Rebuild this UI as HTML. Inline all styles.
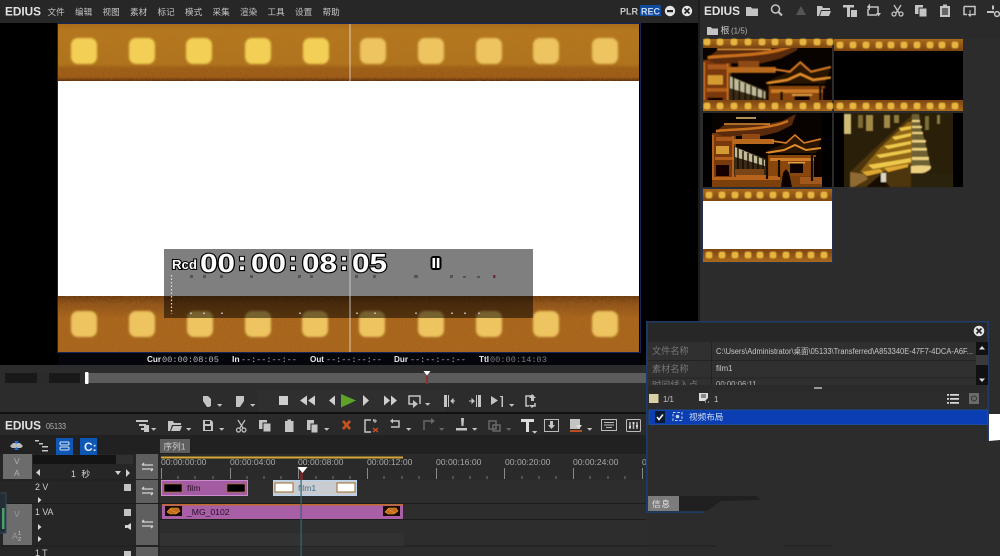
<!DOCTYPE html>
<html lang="zh"><head><meta charset="utf-8"><title>EDIUS</title>
<style>
html,body{margin:0;padding:0;background:#2c2c2c;width:1000px;height:556px;overflow:hidden}
svg{display:block}
text{font-family:"Liberation Sans","Noto Sans CJK SC",sans-serif}
.m{font-size:8.6px;fill:#c4c4c4}
.ed{font-weight:bold;font-size:12.2px;fill:#e2e2e2}
.ic{fill:#c4c4c4}
.st{fill:none;stroke:#c4c4c4;stroke-width:1.5}
.tc{font-family:"Liberation Mono",monospace;font-size:8.6px;fill:#b9b9b9;letter-spacing:.1px}
.tl{font-weight:bold;font-size:8.6px;fill:#e8e8e8}
.big{font-weight:bold;font-size:26px;fill:#fff;stroke:#000;stroke-width:2.2px;paint-order:stroke fill}
.rl{font-size:8.6px;fill:#a8a8a8}
.w{font-size:8.8px;fill:#c9c9c9}
.lab{font-size:8.8px;fill:#777}
</style></head><body>
<svg width="1000" height="556" viewBox="0 0 1000 556" xmlns="http://www.w3.org/2000/svg">
<defs>
<linearGradient id="tp" x1="0" y1="0" x2="0" y2="1"><stop offset="0" stop-color="#a96a1a"/><stop offset=".12" stop-color="#b4761e"/><stop offset=".7" stop-color="#b0721d"/><stop offset=".78" stop-color="#9d5d17"/><stop offset=".93" stop-color="#9c5a17"/><stop offset="1" stop-color="#5e2c0c"/></linearGradient>
<linearGradient id="bt" x1="0" y1="0" x2="0" y2="1"><stop offset="0" stop-color="#6d3a10"/><stop offset=".14" stop-color="#8f5219"/><stop offset=".4" stop-color="#a8641c"/><stop offset="1" stop-color="#a8641c"/></linearGradient>
<linearGradient id="ts" x1="0" y1="0" x2="0" y2="1"><stop offset="0" stop-color="#a9691c"/><stop offset="1" stop-color="#7c4512"/></linearGradient>
<linearGradient id="ts2" x1="0" y1="0" x2="0" y2="1"><stop offset="0" stop-color="#7c4512"/><stop offset="1" stop-color="#a9691c"/></linearGradient>
<filter id="b1" x="-20%" y="-20%" width="140%" height="140%"><feGaussianBlur stdDeviation="1"/></filter>
<filter id="b05" x="-20%" y="-20%" width="140%" height="140%"><feGaussianBlur stdDeviation=".45"/></filter>
<filter id="b03" x="-5%" y="-5%" width="110%" height="110%"><feGaussianBlur stdDeviation=".35"/></filter>
<filter id="grain" x="0" y="0" width="100%" height="100%"><feTurbulence type="fractalNoise" baseFrequency=".55" numOctaves="2" seed="4"/><feColorMatrix values="0 0 0 0 .42  0 0 0 0 .22  0 0 0 0 .02  0 0 0 .7 -.3"/></filter>
<rect id="h" width="26" height="26" rx="7" fill="#f3d055" filter="url(#b1)"/>
<rect id="h2" width="26" height="26" rx="7" fill="#edc45f" filter="url(#b1)"/>
<rect id="th" x="-3.4" y="-3.4" width="6.800" height="6.800" rx="2.200" fill="#e6b640" filter="url(#b05)"/>
<path id="dn" d="M0 0h5.4l-2.7 2.8z" fill="#c4c4c4"/>
<g id="temple">
<rect width="110" height="74" fill="#080300"/>
<g filter="url(#b03)">
<rect y="62" width="110" height="12" fill="#7b3f10"/>
<rect x="0" y="62" width="68" height="5" fill="#b7641c"/><rect x="88" y="64" width="22" height="7" fill="#a2591a"/>
<path d="M0 20H24V64H0z" fill="#7a390c"/>
<path d="M4 33H17V41H4z" fill="#d69a30"/><path d="M4 24H20V28H4z" fill="#a9561a"/>
<path d="M3 44H22V47H3z" fill="#b2601c"/><path d="M4 52H17V63H4z" fill="#120600"/>
<path d="M1 22V64M21 22V64" stroke="#c56e20" stroke-width="1.500"/>
<path d="M3 19 12 12H50L70 8 84 1 80 12 66 19 50 23H10z" fill="#5a290a"/>
<path d="M4 18C20 16 56 17 76 8" stroke="#c8701f" stroke-width="2.500" fill="none"/>
<path d="M12 11H58" stroke="#e09036" stroke-width="1.600"/><path d="M24 5H44" stroke="#e6c070" stroke-width="1.500"/>
<path d="M21 26H62V31H21z" fill="#b8691f"/><path d="M30 21H48V26H30z" fill="#8e4a14"/>
<path d="M22 33 54 46V62H22z" fill="#3a2c12"/>
<path d="M23 34 53 47V53L23 44z" fill="#c1bb98"/>
<path d="M26 35V62M31 38V62M36 40V62M41 42V62M46 44V62M51 46V62" stroke="#160d03" stroke-width="1.400"/>
<path d="M23 56H52V62H23z" fill="#7a4414"/>
<path d="M55 38 74 30 83 22 91 31 109 27 104 40H58z" fill="#2a1204"/>
<path d="M60 28 74 30 83 22 92 30 109 26" stroke="#d27824" stroke-width="1.700" fill="none"/>
<path d="M54 40 72 37 83 32 94 37 109 35" stroke="#e08c2c" stroke-width="2" fill="none"/>
<path d="M56 42H104V63H56z" fill="#8a4610"/>
<path d="M58 45H102V48H58z" fill="#cf7c26"/>
<path d="M78 49h13v11H78z" fill="#0f0500"/><path d="M76 49h17v1.500H76z" fill="#e8a040"/>
<path d="M55 40V66M100 40V68M67 47V64" stroke="#180a02" stroke-width="2.200"/>
<path d="M69 74 71 60 74 56 77 60 80 74z" fill="#080300"/>
<path d="M102 44h8v20h-8z" fill="#0c0501"/>
</g>
</g>
</defs>

<!-- base -->
<rect width="1000" height="556" fill="#2c2c2c"/>
<rect width="698" height="23" fill="#272727"/>
<rect y="23" width="698" height="342" fill="#000"/>

<!-- film frame -->
<rect x="57.500" y="23.500" width="583" height="329" fill="none" stroke="#16265c" stroke-width="1"/>
<rect x="58" y="24" width="581" height="57" fill="url(#tp)"/>
<rect x="58" y="81" width="581" height="215" fill="#fff"/>
<rect x="58" y="296" width="581" height="56" fill="url(#bt)"/>
<rect x="58" y="24" width="581" height="57" filter="url(#grain)"/>
<rect x="58" y="296" width="581" height="56" filter="url(#grain)"/>
<g>
<use href="#h" x="71" y="38"/><use href="#h" x="129" y="38"/><use href="#h" x="186" y="38"/><use href="#h" x="245" y="38"/><use href="#h" x="303" y="38"/><use href="#h2" x="360" y="38"/><use href="#h2" x="418" y="38"/><use href="#h2" x="476" y="38"/><use href="#h2" x="533" y="38"/><use href="#h2" x="592" y="38"/>
<use href="#h2" x="71" y="311"/><use href="#h2" x="129" y="311"/><use href="#h2" x="187" y="311"/><use href="#h2" x="245" y="311"/><use href="#h2" x="302" y="311"/><use href="#h2" x="359" y="311"/><use href="#h2" x="418" y="311"/><use href="#h2" x="476" y="311"/><use href="#h2" x="533" y="311"/><use href="#h2" x="592" y="311"/>
</g>
<rect x="349.500" y="24" width="1" height="328" fill="#fff" fill-opacity=".65"/>

<!-- OSD -->
<rect x="164" y="249" width="369" height="69" fill="#000" fill-opacity=".5"/>
<rect x="349.500" y="249" width="1" height="69" fill="#e0e0e0" fill-opacity=".75"/>
<text x="172" y="269" font-size="12.500" font-weight="bold" fill="#fff" stroke="#000" stroke-width="2" paint-order="stroke fill" textLength="25" lengthAdjust="spacingAndGlyphs">Rcd</text>
<text class="big" x="200" y="272" textLength="35" lengthAdjust="spacingAndGlyphs">00</text>
<text class="big" x="237.500" y="270" textLength="9" lengthAdjust="spacingAndGlyphs">:</text>
<text class="big" x="251" y="272" textLength="35" lengthAdjust="spacingAndGlyphs">00</text>
<text class="big" x="288.500" y="270" textLength="9" lengthAdjust="spacingAndGlyphs">:</text>
<text class="big" x="302" y="272" textLength="35" lengthAdjust="spacingAndGlyphs">08</text>
<text class="big" x="339.500" y="270" textLength="9" lengthAdjust="spacingAndGlyphs">:</text>
<text class="big" x="352" y="272" textLength="35" lengthAdjust="spacingAndGlyphs">05</text>
<rect x="430.500" y="256" width="11" height="14" rx="3" fill="#000"/>
<rect x="432.500" y="258" width="2.600" height="10" fill="#fff"/><rect x="436.800" y="258" width="2.600" height="10" fill="#fff"/>
<path d="M171.500 275V314" stroke="#ddd" stroke-width="1.200" stroke-dasharray="1.500 2"/>
<g fill="#555"><rect x="190" y="275" width="3" height="3"/><rect x="203" y="275" width="3" height="3"/><rect x="220" y="275" width="3" height="3"/><rect x="250" y="275" width="3" height="3"/><rect x="298" y="275" width="3" height="3"/><rect x="310" y="275" width="3" height="3"/><rect x="355" y="275" width="3" height="3"/><rect x="373" y="275" width="3" height="3"/><rect x="414" y="275" width="4" height="3"/><rect x="450" y="275" width="3" height="3"/><rect x="463" y="276" width="3" height="2"/><rect x="477" y="276" width="3" height="2"/></g>
<rect x="493" y="275" width="2.500" height="3" fill="#743038"/>
<g fill="#ccc" fill-opacity=".8"><rect x="190" y="312.500" width="2" height="1.500"/><rect x="203" y="312.500" width="2" height="1.500"/><rect x="221" y="312.500" width="2" height="1.500"/><rect x="299" y="312.500" width="2" height="1.500"/><rect x="356" y="312.500" width="2" height="1.500"/><rect x="374" y="312.500" width="2" height="1.500"/><rect x="415" y="312.500" width="2" height="1.500"/><rect x="451" y="312.500" width="2" height="1.500"/><rect x="464" y="312.500" width="2" height="1.500"/><rect x="478" y="312.500" width="2" height="1.500"/></g>

<!-- status line -->
<rect x="58" y="353" width="582" height="12" fill="#05060c"/>
<text class="tl" x="147" y="362" textLength="14" lengthAdjust="spacingAndGlyphs">Cur</text><text class="tc" x="162" y="362" textLength="57">00:00:08:05</text>
<text class="tl" x="232" y="362">In</text><text class="tc" x="241" y="362" textLength="56">--:--:--:--</text>
<text class="tl" x="310" y="362" textLength="14" lengthAdjust="spacingAndGlyphs">Out</text><text class="tc" x="326" y="362" textLength="56">--:--:--:--</text>
<text class="tl" x="394" y="362" textLength="14" lengthAdjust="spacingAndGlyphs">Dur</text><text class="tc" x="410" y="362" textLength="56">--:--:--:--</text>
<text class="tl" x="479" y="362" textLength="10" lengthAdjust="spacingAndGlyphs">Ttl</text><text class="tc" x="490" y="362" textLength="57" style="fill:#7b7b7b">00:00:14:03</text>

<!-- top bar -->
<text class="ed" x="5" y="15.500" textLength="36" lengthAdjust="spacingAndGlyphs">EDIUS</text>
<text class="m" x="47.500" y="15">文件</text><text class="m" x="75" y="15">编辑</text><text class="m" x="102.500" y="15">视图</text><text class="m" x="130" y="15">素材</text><text class="m" x="157.500" y="15">标记</text><text class="m" x="185" y="15">模式</text><text class="m" x="212.500" y="15">采集</text><text class="m" x="240" y="15">渲染</text><text class="m" x="267.500" y="15">工具</text><text class="m" x="295" y="15">设置</text><text class="m" x="322.500" y="15">帮助</text>
<text x="620" y="14.500" font-size="9.600" font-weight="bold" fill="#c8c8c8" textLength="18" lengthAdjust="spacingAndGlyphs">PLR</text>
<rect x="640" y="5" width="21" height="11" fill="#0f4a9e"/>
<text x="641" y="14.500" font-size="9.600" font-weight="bold" fill="#c8d8ee" textLength="19" lengthAdjust="spacingAndGlyphs">REC</text>
<circle cx="670" cy="11" r="5.200" fill="#e6e6e6"/><rect x="667" y="10" width="6" height="2.200" fill="#222"/>
<circle cx="687" cy="11" r="5.200" fill="#e6e6e6"/><path d="M684.500 8.500l5 5M689.500 8.500l-5 5" stroke="#222" stroke-width="1.700"/>

<!-- bin panel -->
<rect x="698" y="0" width="2" height="322" fill="#1c1c1c"/>
<rect x="700" y="0" width="300" height="38" fill="#2a2a2a"/>
<text class="ed" x="704" y="15" textLength="36" lengthAdjust="spacingAndGlyphs">EDIUS</text>
<path class="ic" d="M746 7h5l1 1.500h6v7.500h-12z"/>
<circle class="st" cx="775.500" cy="9" r="4"/><path class="st" d="M778.500 12l3.500 3.500" style="stroke-width:2"/>
<path d="M796 15l5-9 5 9z" fill="#555"/>
<path class="ic" d="M817 6h5l1 2h7v2h-9l-2 6h-2zM821.500 11h9.500l-2 5h-9z"/>
<path class="ic" d="M843 5h11v2.500h-4V17h-3V7.500h-4z"/><rect x="851" y="10" width="6" height="7" class="ic"/>
<path class="st" d="M870 7h8v8M877 15h-9V9" /><path class="ic" d="M870 3.500v7l-3-3.500zM876 13h5l-2.500 3.500z"/>
<path class="st" d="M894 5l5 8M901 5l-5 8" style="stroke-width:1.300"/><circle class="st" cx="894" cy="14" r="2" style="stroke-width:1.300"/><circle class="st" cx="901" cy="14" r="2" style="stroke-width:1.300"/>
<rect class="ic" x="915" y="5" width="8" height="9"/><rect x="919" y="8" width="8" height="9" class="ic" stroke="#2a2a2a"/>
<path class="ic" d="M940 6h3V4.500h4V6h3v11h-10z"/><rect x="942" y="8" width="6" height="7" fill="#666"/>
<path class="st" d="M964 6.500h11v8h-3M967 14.500h-3v-8"/><path class="ic" d="M969.500 10v4h-2l2.500 3 2.500-3h-2v-4z"/>
<path class="ic" d="M987 11h7v2h-7z"/><path class="ic" d="M992 5.500h2v4h-2z"/><circle class="st" cx="997" cy="14" r="2.400"/>
<path class="ic" d="M707 27h4l1 1.500h6v6.500h-11z"/>
<text class="w" x="720.500" y="33.500" style="font-size:9px">根</text><text x="731" y="33.500" font-size="8" fill="#b2b2b2">(1/5)</text>

<!-- thumb 1 -->
<rect x="703" y="39" width="129" height="72" fill="#000"/>
<svg x="703" y="48" width="129" height="52" viewBox="0 10 110 44" preserveAspectRatio="none"><use href="#temple"/></svg>
<rect x="703" y="39" width="129" height="9" fill="url(#ts)"/><rect x="703" y="100" width="129" height="11" fill="url(#ts2)"/>
<g><use href="#th" x="707" y="42"/><use href="#th" x="720" y="42"/><use href="#th" x="734" y="42"/><use href="#th" x="748" y="42"/><use href="#th" x="762" y="42"/><use href="#th" x="775" y="42"/><use href="#th" x="789" y="42"/><use href="#th" x="803" y="42"/><use href="#th" x="817" y="42"/><use href="#th" x="830" y="42"/>
<use href="#th" x="707" y="106"/><use href="#th" x="720" y="106"/><use href="#th" x="734" y="106"/><use href="#th" x="748" y="106"/><use href="#th" x="762" y="106"/><use href="#th" x="775" y="106"/><use href="#th" x="789" y="106"/><use href="#th" x="803" y="106"/><use href="#th" x="817" y="106"/><use href="#th" x="830" y="106"/></g>
<!-- thumb 2 -->
<rect x="834" y="39" width="129" height="72" fill="#000"/>
<rect x="834" y="39" width="129" height="12" fill="url(#ts)"/><rect x="834" y="100" width="129" height="11" fill="url(#ts2)"/>
<g><use href="#th" x="840" y="45"/><use href="#th" x="853" y="45"/><use href="#th" x="866" y="45"/><use href="#th" x="879" y="45"/><use href="#th" x="891" y="45"/><use href="#th" x="904" y="45"/><use href="#th" x="917" y="45"/><use href="#th" x="930" y="45"/><use href="#th" x="942" y="45"/><use href="#th" x="955" y="45"/>
<use href="#th" x="840" y="106"/><use href="#th" x="853" y="106"/><use href="#th" x="866" y="106"/><use href="#th" x="879" y="106"/><use href="#th" x="891" y="106"/><use href="#th" x="904" y="106"/><use href="#th" x="917" y="106"/><use href="#th" x="930" y="106"/><use href="#th" x="942" y="106"/><use href="#th" x="955" y="106"/></g>
<!-- thumb 3 -->
<rect x="703" y="113" width="129" height="74" fill="#000"/>
<svg x="712" y="113" width="110" height="74" viewBox="0 0 110 74"><use href="#temple"/></svg>
<!-- thumb 4 -->
<rect x="834" y="113" width="129" height="74" fill="#000"/>
<g>
<rect x="844" y="113" width="109" height="74" fill="#2a2009"/>
<g filter="url(#b05)">
<rect x="844" y="114" width="7" height="20" fill="#cdbb76"/><rect x="858" y="115" width="5" height="13" fill="#7e6a30"/><rect x="866" y="115" width="7" height="16" fill="#a08a48"/><rect x="884" y="115" width="6" height="13" fill="#a08a48"/><rect x="894" y="115" width="5" height="8" fill="#8e7a3e"/><rect x="925" y="116" width="4" height="14" fill="#7e6d34"/><rect x="937" y="115" width="3" height="9" fill="#8a7a44"/>
<path d="M912 115 873 150 850 172V187H912z" fill="#4d3509"/>
<path d="M908 122 880 148 868 162 860 172 880 172 912 164V122z" fill="#8f6512"/>
<path d="M868 165l43-7v4l-38 7zM876 155l35-6v3l-31 6zM884 146l27-5v3l-23 5zM892 137l19-4v3l-16 4zM899 128l12-2v3l-10 2z" fill="#eec84c"/>
<path d="M862 172l18-3 3 3-16 4zM884 168l24-4v3l-20 5z" fill="#e0a830"/>
<path d="M850 172l14 2 4 5-14 8h-4z" fill="#8f6a32"/>
<path d="M912 114h7l2 14 4 13 3 14 3 13-6 5-13-2z" fill="#6e6236"/>
<path d="M912 120h8v2h-8zM912 126h10v2h-10zM912 132h11v2h-11zM912 140h14v2.500h-14zM912 148h15v2.500h-15zM912 157h17v3h-17zM911 166q10-1 20 0 1 5-9 7h-11z" fill="#ecd080"/>
<path d="M866 187l14-12 10 12zM878 181h8v6h-8z" fill="#171003"/>
<path d="M881 173h5v9h-5z" fill="#dcd6be"/>
<path d="M911 173h42v14h-42z" fill="#2a2009"/>
</g>
</g>
<!-- thumb 5 -->
<rect x="702.500" y="188.500" width="130" height="74" fill="#1d3a68"/>
<rect x="703" y="189" width="129" height="12" fill="url(#ts)"/><rect x="703" y="201" width="129" height="48" fill="#fff"/><rect x="703" y="249" width="129" height="13" fill="url(#ts2)"/>
<g><use href="#th" x="709" y="195"/><use href="#th" x="722" y="195"/><use href="#th" x="735" y="195"/><use href="#th" x="748" y="195"/><use href="#th" x="760" y="195"/><use href="#th" x="773" y="195"/><use href="#th" x="786" y="195"/><use href="#th" x="799" y="195"/><use href="#th" x="811" y="195"/><use href="#th" x="824" y="195"/>
<use href="#th" x="709" y="255"/><use href="#th" x="722" y="255"/><use href="#th" x="735" y="255"/><use href="#th" x="748" y="255"/><use href="#th" x="760" y="255"/><use href="#th" x="773" y="255"/><use href="#th" x="786" y="255"/><use href="#th" x="799" y="255"/><use href="#th" x="811" y="255"/><use href="#th" x="824" y="255"/></g>

<!-- scrub -->
<rect x="0" y="365" width="646" height="48" fill="#2c2c2c"/>
<rect x="5" y="373" width="75" height="10" fill="#191919"/><rect x="37" y="373" width="12" height="10" fill="#2b2b2b"/>
<rect x="88" y="373" width="558" height="10" fill="#5c5c5c"/>
<rect x="85" y="372" width="3.500" height="12" rx="1" fill="#fff"/>
<rect x="426" y="375" width="2" height="9" fill="#8a3030"/><path d="M423.500 371h7l-3.500 4.500z" fill="#fff"/>

<!-- transport -->
<rect x="258" y="390" width="188" height="22" fill="#2f2f2f"/>
<path d="M203 396h5l3 3v7l-2 1h-2l-4-6z" fill="#c4c4c4"/><use href="#dn" x="217" y="404"/>
<path d="M236 396h8v5l-4 6h-4z" fill="#c4c4c4"/><use href="#dn" x="250" y="404"/>
<rect x="279" y="396" width="9" height="9" fill="#cfcfcf"/>
<path d="M300 400.500l7-5v10zM308 400.500l7-5v10z" fill="#cfcfcf"/>
<path d="M335 395.500v10l-6-5z" fill="#cfcfcf"/>
<path d="M341 394l15 6.500-15 7z" fill="#5da32a"/>
<path d="M363 395v11l6-5.500z" fill="#cfcfcf"/>
<path d="M384 395.500l6 5-6 5zM391 395.500l6 5-6 5z" fill="#cfcfcf"/>
<path class="st" d="M416 404h-7v-8h11v8"/><path d="M413 400v8l5-4z" fill="#c4c4c4"/><use href="#dn" x="425" y="403"/>
<path d="M444 395h3v12h-3zM448 395h1v12h-1z" fill="#c4c4c4"/><path d="M451 401h4M451 401l2-2v4z" stroke="#c4c4c4" fill="#c4c4c4"/>
<path d="M478 395h3v12h-3zM476 395h1v12h-1z" fill="#c4c4c4"/><path d="M469 401h5l-2-2v4l2-2" stroke="#c4c4c4" fill="#c4c4c4"/>
<path d="M491 396l7 4.500-7 4.500z" fill="#c4c4c4"/><path d="M500 396h3v11h-1.500V397H500z" fill="#c4c4c4"/><use href="#dn" x="509" y="404"/>
<path class="st" d="M534 396h-8v10h3M533 406h2v-3"/><path d="M532 394l4 4h-2v3h-3v-3h-2zM532 408l-3-3h6z" fill="#c4c4c4"/>

<!-- timeline toolbar -->
<rect x="0" y="412" width="646" height="2" fill="#111"/>
<rect x="0" y="414" width="646" height="21" fill="#2a2a2a"/>
<text class="ed" x="5" y="429.500" textLength="36" lengthAdjust="spacingAndGlyphs">EDIUS</text>
<text x="46" y="429" font-size="8" fill="#b5b5b5" textLength="20" lengthAdjust="spacingAndGlyphs">05133</text>
<g class="ic">
<path d="M136 420h12v2h-12zM139 424h7v2h-7zM141 428h4v2h-4z"/><rect x="144" y="425" width="5" height="7"/>
<path d="M168 421h5l1 2h7v2h-9l-2 6h-2zM173 426h9l-2 5h-9z"/>
<path fill-rule="evenodd" d="M203 420h8l2 2v9h-10zM205 421v3h5v-3zM205 426v4h6v-4z"/>
<path d="M259 420h8v9h-8z"/><path d="M263 423h8v9h-8z" stroke="#2a2a2a"/>
<path d="M285 421h2.500v-1.500h3.500v1.500h2.500v11h-8.500z"/>
<path d="M307 420h7v10h-7z"/><path d="M311 424h7v9h-7z" stroke="#2a2a2a"/>
</g>
<path class="st" d="M238 420l5 8M245 420l-5 8" style="stroke-width:1.200"/><circle class="st" cx="238.500" cy="430" r="2" style="stroke-width:1.200"/><circle class="st" cx="244" cy="430" r="2" style="stroke-width:1.200"/>
<use href="#dn" x="151" y="428"/><use href="#dn" x="186" y="428"/><use href="#dn" x="219" y="428"/><use href="#dn" x="324" y="428"/>
<path d="M343 421l7 8M350 421l-7 8" stroke="#c9531f" stroke-width="2.600"/>
<path class="st" d="M371 420h-6v12h6M373 420h1"/><path d="M375 419v4M373 421h4" stroke="#c4c4c4"/><path d="M373 428l5 4M378 428l-5 4" stroke="#c9531f" stroke-width="1.400"/>
<path class="st" d="M392 421h7v6h-8"/><path d="M390 421l3-2.500v5z" fill="#c4c4c4"/><use href="#dn" x="406" y="428"/>
<g opacity=".4"><path class="st" d="M433 421h-9v9"/><path d="M431 418l4 3-4 3z" fill="#c4c4c4"/><use href="#dn" x="439" y="428"/></g>
<path d="M461 418h3l-.5 8h-2zM456 428h11v2.500h-11z" fill="#c4c4c4"/><use href="#dn" x="472" y="428"/>
<g opacity=".4"><path class="st" d="M489 421h7v8h-7zM493 425h7v6h-7z"/><use href="#dn" x="506" y="428"/></g>
<path d="M521 419h13v3h-5v10h-3v-10h-5z" fill="#dcdcdc"/><use href="#dn" x="532" y="431"/>
<rect x="544.500" y="419.500" width="14" height="12" fill="none" stroke="#bbb"/><path d="M550 421h3v4h2l-3.500 4-3.500-4h2z" fill="#c4c4c4"/>
<rect x="570" y="419" width="10" height="10" fill="#c4c4c4"/><rect x="570" y="430" width="12" height="2" fill="#bb4e1e"/><path d="M576 425l6 0-3 4z" fill="#ddd"/><use href="#dn" x="587" y="428"/>
<rect x="601.500" y="419.500" width="15" height="11" fill="none" stroke="#bbb"/><path d="M604 422.500h10M604 425h10M606 427.500h6" stroke="#bbb"/>
<rect x="626.500" y="419.500" width="14" height="12" rx="1" fill="none" stroke="#bbb"/><path d="M630 422v7M633.500 422v7M637 422v7" stroke="#bbb" stroke-width="1.500"/><path d="M629 427h2M632.500 423h2M636 426h2" stroke="#eee" stroke-width="1.500"/>

<!-- timeline area -->
<rect x="0" y="435" width="160" height="121" fill="#262626"/>
<rect x="160" y="435" width="486" height="121" fill="#2d2d2d"/>
<rect x="0" y="435" width="646" height="19" fill="#212121"/>
<path d="M10 446l3-3h7l3 3-2 2H12z" fill="#bbb"/><path d="M14 441h5l-2.500 3z" fill="#1f6fd0"/><path d="M14 450h5l-2.500-3z" fill="#1f6fd0"/>
<path d="M35 440h4v1.500h-4zM39 443h4v1.500h-4zM42 446h6v1.500h-6zM42 450h6v1.500h-6z" fill="#c4c4c4"/>
<rect x="56" y="438" width="17" height="17" fill="#0f57b5"/><rect x="60" y="442" width="9" height="3" rx="1" fill="none" stroke="#dbe7f5"/><rect x="60" y="447" width="9" height="3" rx="1" fill="none" stroke="#dbe7f5"/>
<rect x="80" y="438" width="17" height="17" fill="#0f57b5"/><text x="84" y="451" font-size="12" font-weight="bold" fill="#e4eef8">C:</text>
<rect x="160" y="439" width="30" height="14" fill="#5e5e5e"/><text x="163.500" y="449.500" font-size="8.600" fill="#cfcfcf">序列1</text>

<!-- headers -->
<rect x="3" y="454" width="29" height="25" fill="#6c6c6c"/>
<text x="14" y="464" font-size="8.500" fill="#b0b0b0">V</text><text x="14" y="476" font-size="8.500" fill="#b0b0b0">A</text>
<rect x="33" y="455" width="83" height="9" fill="#141414"/><rect x="116" y="455" width="17" height="9" fill="#303030"/>
<path d="M40 469v7l-4-3.500zM126 469v8l4-4zM115 471h6l-3 4z" fill="#d0d0d0"/>
<text x="71" y="477" font-size="8.800" fill="#cfcfcf" letter-spacing="1.500">1 秒</text>
<rect x="136" y="454" width="22" height="25" fill="#5f5f5f"/>
<rect x="136" y="480" width="22" height="23" fill="#5f5f5f"/>
<rect x="136" y="503" width="22" height="42" fill="#5f5f5f"/>
<rect x="136" y="547" width="22" height="9" fill="#5f5f5f"/>
<g stroke="#d2d2d2" stroke-width="1.300" fill="none"><path d="M142 465h11M144 463l-2 2M142 469h11M151 471l2-2"/><path d="M142 489h11M144 487l-2 2M142 493h11M151 495l2-2"/><path d="M142 522h11M144 520l-2 2M142 526h11M151 528l2-2"/></g>
<path d="M0 480H135M0 503.500H646M0 546H646M160 519.500H646" stroke="#1d1d1d" stroke-width="1"/>
<rect x="3" y="504" width="29" height="41" fill="#6c6c6c"/>
<text x="14" y="517" font-size="8.500" fill="#9a9a9a">V</text><text x="12" y="539" font-size="8.500" fill="#9a9a9a">A</text><text x="18" y="535" font-size="5.500" fill="#ccc">1</text><text x="18" y="541" font-size="5.500" fill="#ccc">2</text>
<text x="35" y="490" font-size="8.800" fill="#cfcfcf">2 V</text>
<text x="35" y="515" font-size="8.800" fill="#cfcfcf">1 VA</text>
<text x="35" y="556" font-size="8.800" fill="#cfcfcf">1 T</text>
<rect x="124" y="484" width="7" height="7" fill="#c2c2c2"/><rect x="124" y="509" width="7" height="7" fill="#c2c2c2"/><rect x="124" y="551" width="7" height="5" fill="#c2c2c2"/>
<path d="M38 497v6l3.500-3zM38 524v6l3.500-3zM38 536v6l3.500-3zM131 523v7l-4-2.500v-2z" fill="#d8d8d8"/><rect x="125" y="525" width="2" height="3" fill="#d8d8d8"/>
<path d="M0 493h6v40H0" fill="#222d35" stroke="#35475a"/><rect x="2" y="508" width="2.500" height="21" fill="#4f9e6a"/>

<!-- ruler -->
<rect x="160" y="455" width="486" height="25" fill="#2a2a2a"/>
<rect x="161" y="456.500" width="242" height="2" fill="#d6a63a"/>
<g class="rl"><text x="161" y="465">00:00:00:00</text><text x="230" y="465">00:00:04:00</text><text x="298" y="465">00:00:08:00</text><text x="367" y="465">00:00:12:00</text><text x="436" y="465">00:00:16:00</text><text x="505" y="465">00:00:20:00</text><text x="573" y="465">00:00:24:00</text><text x="642" y="465">0</text></g>
<path d="M161.500 468v11M230.500 468v11M298.500 468v11M367.500 468v11M436.500 468v11M504.500 468v11M573.500 468v11M642.500 468v11" stroke="#8a8a8a"/>
<path d="M178 476v3M195 476v3M213 476v3M247 476v3M264 476v3M281 476v3M316 476v3M333 476v3M350 476v3M384 476v3M402 476v3M419 476v3M453 476v3M470 476v3M487 476v3M522 476v3M539 476v3M556 476v3M590 476v3M608 476v3M625 476v3" stroke="#777"/>

<!-- clips -->
<rect x="161.500" y="480.500" width="86" height="15" fill="#a35ba1" stroke="#cb8ccc"/>
<rect x="164" y="484" width="18" height="8" fill="#000" stroke="#b37a2a" stroke-width=".6"/><rect x="227" y="484" width="18" height="8" fill="#000" stroke="#b37a2a" stroke-width=".6"/>
<text x="187" y="491" font-size="8.600" fill="#2b122b">film</text>
<rect x="273.500" y="480.500" width="83" height="15" fill="#c9ccd0" stroke="#b9d4ec"/>
<rect x="275" y="483" width="18" height="9" fill="#fff" stroke="#9b6a2a" stroke-width="1"/><rect x="337" y="483" width="18" height="9" fill="#fff" stroke="#9b6a2a" stroke-width="1"/>
<text x="298" y="491" font-size="8.600" fill="#44708c">film1</text>
<rect x="162" y="504" width="241" height="15" fill="#a85fa6"/><rect x="162" y="504" width="241" height="1.500" fill="#bf6a2f"/>
<rect x="165" y="506" width="17" height="10" fill="#1a0a02"/><path d="M167 512l4-4h7l2 3-4 3h-6zM169 509l8 4" fill="#c46a1c" stroke="#e8a040" stroke-width=".6"/>
<rect x="383" y="506" width="17" height="10" fill="#1a0a02"/><path d="M385 512l4-4h7l2 3-4 3h-6zM387 509l8 4" fill="#c46a1c" stroke="#e8a040" stroke-width=".6"/>
<text x="187" y="515" font-size="8.600" fill="#24102a">_MG_0102</text>
<rect x="160" y="533" width="244" height="13" fill="#323232"/>
<rect x="300.500" y="476" width="1.200" height="80" fill="#2b6a74"/>
<rect x="300" y="472" width="3" height="8" fill="#6b2a2a"/>
<path d="M297.500 467h10l-5 6z" fill="#fff"/>

<!-- info panel -->
<rect x="646" y="321" width="343" height="192" fill="#2c2c2c"/>
<path d="M646.800 513V321.800H988.200V441M646 512.200H704" fill="none" stroke="#1f3c66" stroke-width="1.600"/>
<rect x="648" y="322.500" width="339" height="20" fill="#272727"/>
<circle cx="979" cy="331" r="5.300" fill="#e6e6e6"/><path d="M976.500 328.500l5 5M981.500 328.500l-5 5" stroke="#222" stroke-width="1.700"/>
<rect x="648" y="342" width="328" height="43" fill="#303030"/>
<path d="M648 360.500H976M648 378H976M711.500 342V385" stroke="#232323"/>
<text class="lab" x="652" y="354" style="font-size:9.200px">文件名称</text><text class="lab" x="652" y="372" style="font-size:9.200px">素材名称</text><text class="lab" x="652" y="388" style="font-size:9.200px">时间线入点</text>
<text x="716" y="354" font-size="7.800" fill="#c8c8c8" textLength="257" lengthAdjust="spacingAndGlyphs">C:\Users\Administrator\桌面\05133\Transferred\A853340E-47F7-4DCA-A6F...</text>
<text x="716" y="371" font-size="7.800" fill="#c8c8c8">film1</text>
<text x="716" y="387" font-size="7.800" fill="#b5b5b5">00:00:06:11</text>
<rect x="976" y="342" width="12" height="43" fill="#111"/><rect x="976" y="355" width="12" height="10" fill="#3a3a3a"/>
<path d="M982 346l-3 3.500h6zM982 382l-3-3.500h6z" fill="#ddd"/>
<rect x="648" y="385" width="339" height="8" fill="#2a2a2a"/>
<rect x="814" y="387" width="8" height="2" fill="#999"/>
<rect x="649" y="394" width="9.500" height="9" fill="#d9d0a8"/>
<text x="663" y="402" font-size="7.800" fill="#c8c8c8">1/1</text>
<path d="M699 393h9v5l-3 3h-6z" fill="#ddd"/><path d="M701 395h5M701 397h5" stroke="#333"/><path d="M705 402h1M708 402h1" stroke="#ddd"/>
<text x="714" y="402" font-size="7.800" fill="#c8c8c8">1</text>
<path d="M947 394h2v1.800h-2zM950 394h9v1.800h-9zM947 398h2v1.800h-2zM950 398h9v1.800h-9zM947 402h2v1.800h-2zM950 402h9v1.800h-9z" fill="#d8d8d8"/>
<path d="M969 393h10v11h-10z" fill="#6b6b6b"/><circle cx="974" cy="398.500" r="2.500" fill="none" stroke="#333"/>
<rect x="649" y="410" width="338.500" height="14.500" fill="#0a3eb2" stroke="#1f54a8" stroke-width=".8"/>
<rect x="655" y="411" width="10" height="12" fill="#0c1a33"/><path d="M657 417l2 2.500 4-5" fill="none" stroke="#fff" stroke-width="1.500"/>
<rect x="673" y="412.500" width="9" height="8" fill="none" stroke="#c8d4e8" stroke-dasharray="2.500 1.800"/><circle cx="677.500" cy="416.500" r="1.800" fill="#c8d4e8"/>
<text x="689" y="420" font-size="8.600" fill="#cfdcf0">视频布局</text>
<path d="M989 414h11v26l-11 1z" fill="#fff"/>
<rect x="648" y="496" width="31" height="15" fill="#7c7c7c"/><text x="652" y="507" font-size="8.600" fill="#e6e6e6" letter-spacing=".8">信息</text>
<path d="M679 496h78l4 4-40 1-14 10h-28z" fill="#202020"/>
<path d="M640 546h76M784 546h48" stroke="#1f1f1f"/>
</svg>
</body></html>
